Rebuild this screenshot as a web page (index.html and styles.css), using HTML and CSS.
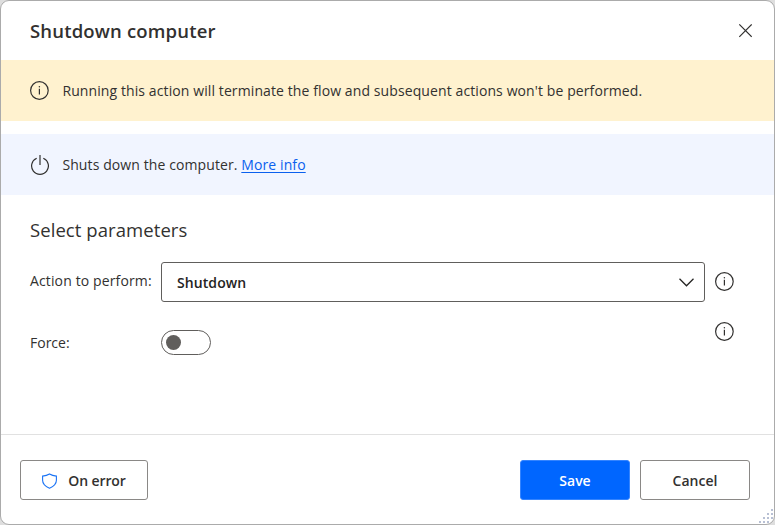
FILE: index.html
```html
<!DOCTYPE html>
<html lang="en">
<head>
<meta charset="utf-8">
<title>Shutdown computer</title>
<link rel="stylesheet" href="styles.css">
</head>
<body>
<svg class="defs" width="0" height="0" aria-hidden="true">
  <symbol id="info" viewBox="0 0 20 20">
    <circle cx="10.4" cy="9.5" r="8.8" fill="none" stroke="currentColor" stroke-width="1.2"/>
    <path d="M10.4 7.800V13.500" stroke="currentColor" stroke-width="1.2"/>
    <circle cx="10.4" cy="5.800" r=".75" fill="currentColor"/>
  </symbol>
</svg>
<main class="dialog">
  <header class="header">
    <h1 class="title">Shutdown computer</h1>
    <button class="close" aria-label="Close"><svg width="14" height="14" viewBox="0 0 14 14"><path d="M1.300.400l12.400 12.400M13.700.400L1.300 12.800" stroke="currentColor" stroke-width="1.2"/></svg></button>
  </header>
  <section class="banner warning">
    <svg class="icon" width="20" height="20"><use href="#info"/></svg>
    <p>Running this action will terminate the flow and subsequent actions won't be performed.</p>
  </section>
  <section class="banner description">
    <svg class="icon" width="20" height="20" viewBox="0 0 20 20" fill="none" stroke="currentColor" stroke-width="1.2"><path d="M11 0v10M7.700 3.200a8.400 8.400 0 1 0 6.600 0"/></svg>
    <p>Shuts down the computer. <a href="#">More info</a></p>
  </section>
  <section class="parameters">
    <h2>Select parameters</h2>
    <div class="row action">
      <span class="label">Action to perform:</span>
      <div class="select"><span>Shutdown</span>
        <svg width="16" height="10" viewBox="0 0 16 10"><path d="M1.500 1.800l7 7 7-7" fill="none" stroke="currentColor" stroke-width="1.25"/></svg>
      </div>
      <svg class="info" width="20" height="20"><use href="#info"/></svg>
    </div>
    <div class="row force">
      <span class="label">Force:</span>
      <div class="toggle" role="switch" aria-checked="false"><span class="knob"></span></div>
      <svg class="info" width="20" height="20"><use href="#info"/></svg>
    </div>
  </section>
  <footer class="footer">
    <button class="button error"><svg width="16" height="16" viewBox="0 0 16 16"><path d="M7.500 1C5.400 2.300 3 2.900.600 3.100v4.100c0 3.800 2.900 6.200 6.900 8 4-1.800 6.900-4.200 6.900-8V3.100C12 2.900 9.600 2.300 7.500 1z" fill="none" stroke="#1a73f5" stroke-width="1.1"/></svg><span>On error</span></button>
    <button class="button save"><span>Save</span></button>
    <button class="button cancel"><span>Cancel</span></button>
  </footer>
  <svg class="grip" width="14" height="14" viewBox="0 0 14 14" fill="#b8c0d4"><path d="M12 0h2v2h-2zM8 4h2v2H8zM12 4h2v2h-2zM4 8h2v2H4zM8 8h2v2H8zM12 8h2v2h-2zM0 12h2v2H0zM4 12h2v2H4zM8 12h2v2H8z"/></svg>
</main>
</body>
</html>
```
FILE: styles.css
```css
* { box-sizing: border-box; }
body { margin: 0; background: #dedede; color: #323130; font: 14px/20px "Open Sans", "Noto Sans", sans-serif; }
h1, h2, p { margin: 0; }
button { font: inherit; color: inherit; padding: 0; }
.defs { display: block; }
.dialog { position: relative; display: flex; flex-direction: column; width: 775px; height: 525px; border: 1px solid #ababab; border-radius: 9px; background: #fff; overflow: hidden; }
.header { display: flex; align-items: center; justify-content: space-between; height: 59px; padding: 0 22px 0 29px; }
.title { font-size: 18.5px; line-height: 26px; font-weight: 600; letter-spacing: .17px; }
.close { display: flex; border: 0; background: none; }
.banner { display: flex; align-items: center; height: 61px; padding-left: 28px; gap: 13.4px; white-space: nowrap; letter-spacing: .1px; }
.warning { background: #fff2cf; }
.description { margin-top: 13px; background: #f1f5ff; }
.banner a { color: #0a60ee; text-underline-offset: 2px; }
.parameters { flex: 1; padding: 22px 40px 0 29px; }
h2 { font-size: 18.5px; line-height: 26px; font-weight: 400; letter-spacing: .07px; }
.row { display: grid; grid-template-columns: 131px 544px 29px; align-items: center; }
.label { white-space: nowrap; letter-spacing: .13px; padding-bottom: 2px; }
.row .info { justify-self: end; }
.action { margin-top: 19px; height: 40px; }
.select { display: flex; align-items: center; justify-content: space-between; height: 40px; padding: 0 10px 0 15px; border: 1px solid #605e5c; border-radius: 3px; font-weight: 600; letter-spacing: .08px; color: #242322; }
.select span { padding-top: 1px; }
.force { height: 25px; margin-top: 28px; align-items: start; }
.force .label { padding-top: 3px; letter-spacing: 0; }
.force .info { margin-top: -8px; }
.toggle { display: flex; align-items: center; width: 50px; height: 25px; border: 1px solid #605e5c; border-radius: 13px; padding-left: 4px; }
.knob { width: 15px; height: 15px; border-radius: 50%; background: #605e5c; }
.footer { display: flex; height: 90px; padding: 25px 24px 0 19px; border-top: 1px solid #e1e1e1; }
.button { display: flex; align-items: center; justify-content: center; width: 110px; height: 40px; border: 1px solid #8a8886; border-radius: 3px; background: #fff; font-weight: 600; }
.button span { padding-top: 2px; }
.error { width: 128px; gap: 10px; margin-right: auto; letter-spacing: -.1px; }
.error svg { margin-top: 1px; }
.save { border-color: #3484ff; background: #0066ff; color: #fff; margin-right: 10px; }
.grip { position: absolute; right: 1px; bottom: 1px; }
```
